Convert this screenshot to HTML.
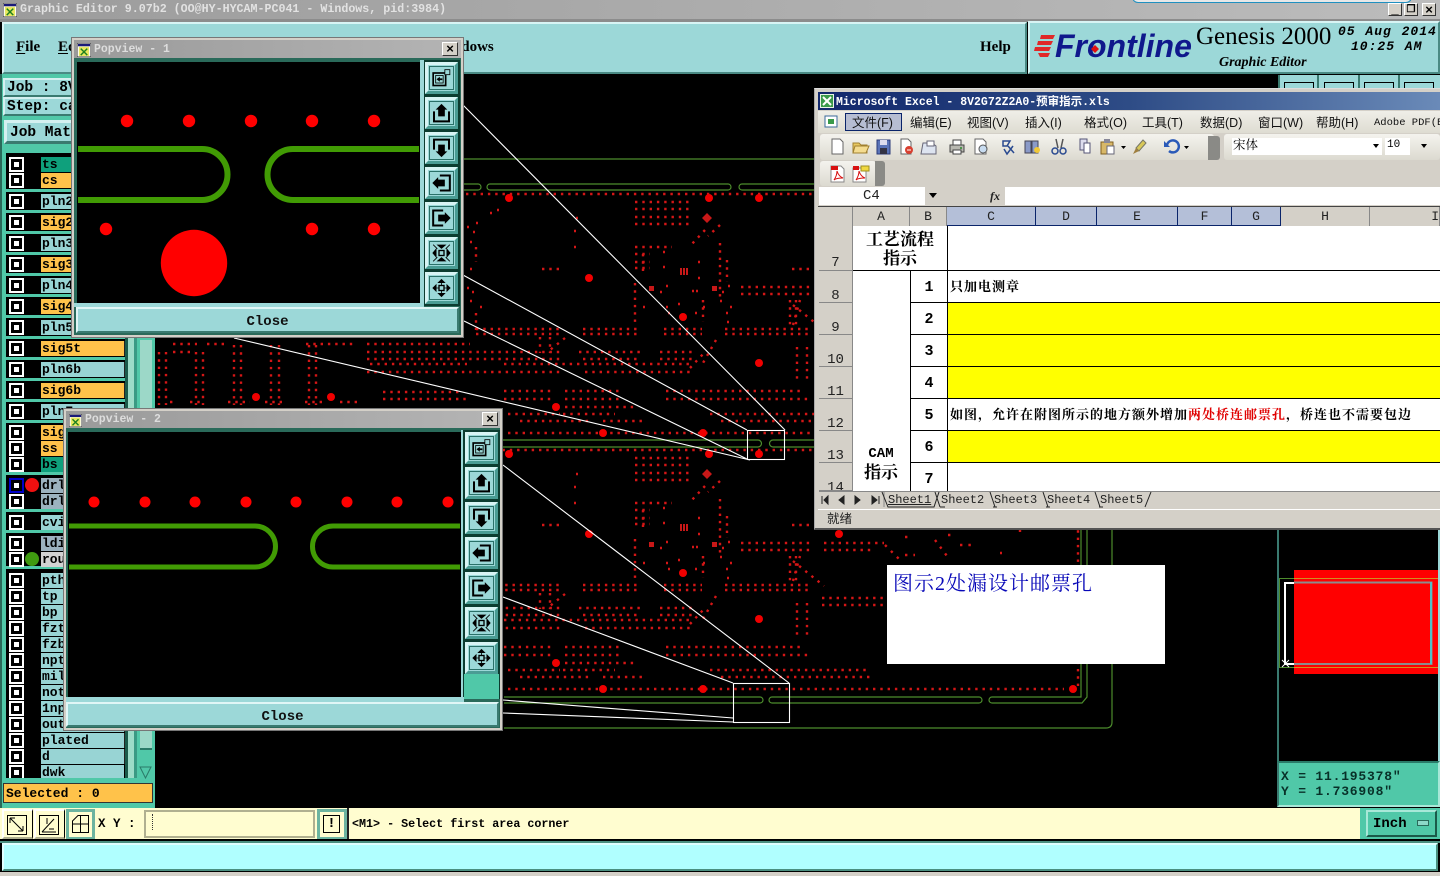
<!DOCTYPE html>
<html lang="zh"><head><meta charset="utf-8"><title>Graphic Editor</title>
<style>
html,body{margin:0;padding:0;background:#000;width:1440px;height:876px;overflow:hidden}
div,svg{position:absolute}
div{white-space:nowrap;box-sizing:border-box}
body{font-family:"Liberation Mono","Noto Sans CJK SC",monospace;font-weight:bold;color:#000}
.tl{background:#9cd8d8;border:2px solid;border-color:#d4f0f0 #3a7a70 #3a7a70 #d4f0f0}
.r{left:8px;width:116px;height:15px}
.r i{position:absolute;left:1px;top:0;width:15px;height:15px;box-sizing:border-box;background:#000;border:2px solid #fff}
.r i:after{content:"";position:absolute;left:3px;top:3px;width:5px;height:5px;background:#fff}
.r b{position:absolute;left:33px;top:0;width:82px;height:15px;background:#98d4d4;font:bold 13px/16px "Liberation Mono",monospace;padding-left:1px;border-right:1px solid #222}
.r b.o{background:#ffc24a}.r b.g{background:#0fa07c}.r b.s{background:#9cb2bf}.r b.w{background:#d2d2d2}
.bar{left:6px;width:119px;height:3px;background:#50c8a8}
.pw{background:#d4d0c8;border:1px solid #777}
.pt{background:linear-gradient(90deg,#9a9a9a,#b4b4b4);color:#ddd;font:bold 11.5px/18px "Liberation Mono",monospace;letter-spacing:0}
.px{background:#d4d0c8;border:1px solid;border-color:#fff #333 #333 #fff;font:bold 13px/12px "Liberation Sans",sans-serif;text-align:center}
.pb{width:33px;height:32px;background:#9cd8d8;border:3px solid;border-color:#d8f4f4 #4a9c94 #4a9c94 #d8f4f4}
.pb span{position:absolute;left:1px;top:1px;right:1px;bottom:1px;border:1px solid #2a7068;display:block}
.pb svg{left:3px;top:3px;width:21px;height:20px}
.cl{background:#9cd8d8;border:2px solid;border-color:#e0f6f6 #3a7a70 #3a7a70 #e0f6f6;font:bold 14px/25px "Liberation Mono",monospace;text-align:center;color:#111}
.m{top:115px;font:12.5px/16px "Liberation Sans","Noto Sans CJK SC",sans-serif;font-weight:normal;color:#111}
.h{top:207px;height:19px;background:#d4d0c8;border-right:1px solid #888;font:normal 13px/20px "Liberation Mono",monospace;text-align:center;color:#222}
.h.s{background:#b4bfd8;border-right:1px solid #0a246a;border-bottom:1px solid #0a246a}
.rh{left:819px;width:34px;background:#d4d0c8;border-bottom:1px solid #888;border-right:1px solid #888;font:normal 14px/15px "Liberation Mono",monospace;text-align:center;color:#222;padding-top:18px}
.y{left:948px;width:492px;background:#ff0;height:31px}
.bl{left:947px;width:493px;height:1px;background:#000}
.n{left:911px;width:36px;text-align:center;font:bold 15px/18px "Liberation Mono",monospace}
.cj{font:bold 13px/16px "Liberation Serif","Noto Serif CJK SC",serif;letter-spacing:1px}
.st{top:493px;font:normal 12px/14px "Liberation Mono",monospace;color:#222}
.tb{top:134px;height:26px;background:linear-gradient(#f4f3ee,#dcdad0);border-radius:3px}
.bb{background:#fffdd0;border:2px solid;border-color:#fff #b0b090 #b0b090 #fff}
</style></head><body>
<svg width="0" height="0" style="left:0;top:0">
<defs>
<symbol id="wi" viewBox="0 0 15 15"><rect width="15" height="15" fill="#fff" stroke="#222"/><rect x="1" y="1" width="13" height="2.5" fill="#1a1a7a"/><rect x="2" y="4" width="11" height="10" fill="#e8e860"/><path d="M4 6l7 7M11 6l-7 7" stroke="#208020" stroke-width="1.6"/></symbol>
<symbol id="i1" viewBox="0 0 24 24"><rect x="2" y="6" width="15" height="15" fill="none" stroke="#000" stroke-width="2"/><rect x="5" y="9" width="9" height="9" fill="none" stroke="#000"/><rect x="16" y="2" width="6" height="6" fill="#9cd8d8" stroke="#000"/><path d="M6 13.5l4-3v2h3v2h-3v2z"/></symbol>
<symbol id="i2" viewBox="0 0 24 24"><path d="M3 10v12h18V10" fill="none" stroke="#000" stroke-width="2.4"/><path d="M12 1l7 7h-3v8H8V8H5z"/></symbol>
<symbol id="i3" viewBox="0 0 24 24"><path d="M3 14V2h18v12" fill="none" stroke="#000" stroke-width="2.4"/><path d="M12 23l7-7h-3V8H8v8H5z"/></symbol>
<symbol id="i4" viewBox="0 0 24 24"><path d="M10 3h12v18H10" fill="none" stroke="#000" stroke-width="2.4"/><path d="M1 12l7-7v3h8v8H8v3z"/></symbol>
<symbol id="i5" viewBox="0 0 24 24"><path d="M14 3H2v18h12" fill="none" stroke="#000" stroke-width="2.4"/><path d="M23 12l-7-7v3H8v8h8v3z"/></symbol>
<symbol id="i6" viewBox="0 0 24 24"><rect x="9" y="9" width="6" height="6" fill="none" stroke="#000" stroke-width="1.6"/><path d="M1 12l5-6v12zM23 12l-5-6v12zM12 7L6 2h12zM12 17l-6 5h12z"/><path d="M2 2l5 5M22 2l-5 5M2 22l5-5M22 22l-5-5" stroke="#000"/></symbol>
<symbol id="i7" viewBox="0 0 24 24"><rect x="9" y="9" width="6" height="6" fill="none" stroke="#000" stroke-width="1.6"/><path d="M1 12l5-5v10zM23 12l-5-5v10zM12 1l5 5H7zM12 23l-5-5h10z"/><path d="M6 12h3M15 12h3M12 6v3M12 15v3" stroke="#000"/></symbol>
</defs></svg>

<!-- title bar -->
<div style="left:0;top:0;width:1440px;height:19px;background:linear-gradient(90deg,#9c9c9c,#bcbcbc)"></div>
<div style="left:0;top:19px;width:1440px;height:3px;background:#8c8c8c"></div>
<svg style="left:3px;top:3px" width="14" height="14"><use href="#wi"/></svg>
<div style="left:20px;top:1px;color:#e2e2e2;font:bold 11.65px/17px 'Liberation Mono',monospace">Graphic Editor 9.07b2 (OO@HY-HYCAM-PC041 - Windows, pid:3984)</div>
<div style="left:1132px;top:-3px;width:280px;height:6px;background:#e8e8e8;border:1px solid #2090c0;border-radius:0 0 6px 6px"></div>
<div class="px" style="left:1388px;top:3px;width:14px;height:13px;line-height:10px">_</div>
<div class="px" style="left:1404px;top:3px;width:14px;height:13px;font-size:10px">❐</div>
<div class="px" style="left:1422px;top:3px;width:14px;height:13px">×</div>

<!-- menu bar -->
<div style="left:2px;top:22px;width:1025px;height:52px;background:#9cd8d8;border:2px solid;border-color:#d8f4f4 #4a8a84 #4a8a84 #d8f4f4"></div>
<div style="left:16px;top:38px;font:bold 15px/18px 'Liberation Serif',serif"><u style="text-underline-offset:2px">F</u>ile</div>
<div style="left:58px;top:38px;font:bold 15px/18px 'Liberation Serif',serif"><u style="text-underline-offset:2px">E</u>dit</div>
<div style="left:434px;top:38px;font:bold 15px/18px 'Liberation Serif',serif">Windows</div>
<div style="left:980px;top:38px;font:bold 15px/18px 'Liberation Serif',serif">Help</div>

<!-- logo panel -->
<div style="left:1028px;top:21px;width:412px;height:53px;background:#9cd8d8;border:2px solid;border-color:#d8f4f4 #4a8a84 #4a8a84 #d8f4f4"></div>
<svg style="left:1033px;top:34px" width="24" height="24"><path d="M8 1h14l-2 4H7zM5 7h15l-2 4H4zM2 13h16l-2 4H1zM5 19h12l-2 4H7z" fill="#e02828"/></svg>
<div style="left:1055px;top:27px;color:#10188c;font:italic bold 32px/38px 'Liberation Sans',sans-serif">Frontline</div>
<svg style="left:1091px;top:45px" width="8" height="8"><path d="M4 0l4 4-4 4-4-4z" fill="#e01010"/></svg>
<div style="left:1196px;top:22px;font:normal 25px/30px 'Liberation Serif',serif">Genesis 2000</div>
<div style="left:1219px;top:54px;font:italic bold 14px/17px 'Liberation Serif',serif">Graphic Editor</div>
<div style="left:1338px;top:24px;font:italic bold 13px/16px 'Liberation Mono',monospace;letter-spacing:1px;word-spacing:1px">05 Aug 2014</div>
<div style="left:1351px;top:39px;font:italic bold 13px/16px 'Liberation Mono',monospace;letter-spacing:1px;word-spacing:1px">10:25 AM</div>

<!-- top right canvas buttons -->
<div style="left:1278px;top:75px;width:162px;height:14px;background:#9cd8d8"></div>
<div style="left:1278px;top:75px;width:2px;height:14px;background:#3a7a70"></div>
<div style="left:1284px;top:82px;width:30px;height:8px;border:1px solid #000"></div>
<div style="left:1324px;top:82px;width:30px;height:8px;border:1px solid #000"></div>
<div style="left:1364px;top:82px;width:30px;height:8px;border:1px solid #000"></div>
<div style="left:1404px;top:82px;width:30px;height:8px;border:1px solid #000"></div>
<div style="left:1317px;top:75px;width:2px;height:14px;background:#3a7a70"></div>
<div style="left:1358px;top:75px;width:2px;height:14px;background:#3a7a70"></div>
<div style="left:1398px;top:75px;width:2px;height:14px;background:#3a7a70"></div>

<!-- PCB canvas -->
<svg style="left:0;top:0" width="1440" height="876">
<defs>
<g id="bd">
<path fill="none" stroke="#d41616" stroke-width="2.4" stroke-dasharray="2.4 4.9" d="M466 194H812M635 202H690M635 209H690M635 217H690M635 224H690M635 247H672M635 254H650M635 262H650M635 268H650M542 269H560M792 269H811M741 287H812M824 287H884M741 294H812M824 294H872M476 329H561M583 329H640M664 329H702M725 329H808M476 334H561M583 334H640M664 334H702M725 334H808M822 342H886M822 349H886M367 352H563M579 352H642M660 352H693M367 359H563M583 359H640M660 359H693M504 364H690M367 372H561M585 372H694M370 364H467M504 391H555M565 391H622M666 391H804M383 392H463M504 399H555M565 399H622M666 399H808M383 399H467M565 407H634M508 414H560M563 414H615M710 414H868M520 421H590M603 421H644M721 421H873M508 433H1064"/>
<path fill="none" stroke="#d41616" stroke-width="2.4" stroke-dasharray="2.4 4.9" d="M476 247V262M476 313V330M635 283V322M720 243V300M727 260V282M790 300V325M796 300V325M797 347V383M807 347V383M540 337V353M550 337V353M643 254V272M703 300V322M1078 194V433"/>
<path fill="none" stroke="#d41616" stroke-width="2.4" stroke-dasharray="2.4 5.5" d="M705 230L690 246M720 225L708 236M716 340L703 363M690 368L705 352M565 338L550 350M793 305L824 330M793 325L800 300"/>
<path fill="none" stroke="#d41616" stroke-width="2.4" d="M497 210h2M490 213h2M476 223h2M467 227h2M473 232h2M470 242h2M470 269h2M467 288h2M472 292h2M470 301h2M480 307h2M576 218h2M574 231h2M574 247h2M663 252h2M663 267h2M698 262h2M698 278h2M666 286h2M660 292h2M692 291h2M696 291h2M722 292h2M728 286h2M720 301h2M730 307h2M726 313h2M727 322h2M643 307h2M666 307h2M678 304h2M695 313h2M703 307h2M668 313h2"/>
<path fill="#c81818" d="M707 213l5 5-5 5-5-5zM680 268h2v7h-2zM683 268h2v7h-2zM686 268h2v7h-2zM649 286h5v5h-5zM712 286h5v5h-5z"/>
<g fill="#f00000"><circle cx="509" cy="198" r="4"/><circle cx="709" cy="198" r="4"/><circle cx="759" cy="198" r="4"/><circle cx="589" cy="278" r="4"/><circle cx="683" cy="317" r="4"/><circle cx="759" cy="363" r="4"/><circle cx="556" cy="407" r="4"/><circle cx="603" cy="433" r="4"/><circle cx="703" cy="433" r="4"/><circle cx="839" cy="278" r="4"/><circle cx="1073" cy="433" r="4"/></g>
</g>
</defs>
<use href="#bd"/>
<use href="#bd" y="256"/>
<path fill="none" stroke="#d41616" stroke-width="2.4" stroke-dasharray="2.4 4.9" d="M159 352V405M166 352V405M196 352V405M203 352V405M234 345V405M241 345V405M271 345V405M279 345V405M309 345V405M316 345V405M173 344H197M207 344H228M173 352H195M306 344H357M367 344H470M170 402H176M190 402H200M228 402H250M265 402H285M305 402H325M340 402H360"/>
<path fill="none" stroke="#d41616" stroke-width="2.4" stroke-dasharray="2.4 6" d="M885 545L900 560M905 555h10M935 540L950 560M960 545H975M905 537h3M948 535h3M1020 530v2M1000 553h2"/>
<g fill="#f00000"><circle cx="256" cy="397" r="4"/><circle cx="331" cy="397" r="4"/></g>
<g fill="none" stroke="#4c8c2c" stroke-width="1.2">
<path d="M463 159H814M463 184H478a3 3 0 0 1 0 6H463M490 184H728a3 3 0 0 1 0 6H490a3 3 0 0 1 0-6M814 184H742a3 3 0 0 0 0 6H814"/>
<path d="M500 440H758a3.500 3.500 0 0 1 0 7H500M814 440H773a3.500 3.500 0 0 0 0 7H814"/>
<path d="M504 697H760a3 3 0 0 1 0 6H504M772 697H979a3 3 0 0 1 0 6H772a3 3 0 0 1 0-6M992 697H1081V530M992 703H1082L1087 697V530a0 0 0 0 1 0 0M992 697a3 3 0 0 0 0 6M504 728H1106q6 0 6-6V530"/>
</g>
<g fill="none" stroke="#fff" stroke-width="1.100">
<rect x="747.500" y="430.500" width="37" height="29"/>
<path d="M463 105L785 430M463 275L747 430M464 321L747 459M234 338L750 460"/>
<rect x="733.500" y="683.500" width="56" height="39"/>
<path d="M503 465L789 683M503 597L733 683M503 700L733 718M503 713L733 722"/>
</g>
</svg>

<!-- left panel -->
<div style="left:0;top:74px;width:155px;height:734px;background:#50c8a8;border-left:2px solid #2a6a5a"></div>
<div class="tl" style="left:3px;top:78px;width:80px;height:19px;font:bold 14.5px/17px 'Liberation Mono',monospace;padding-left:2px">Job : 8V2G72</div>
<div class="tl" style="left:3px;top:97px;width:80px;height:19px;font:bold 14.5px/17px 'Liberation Mono',monospace;padding-left:2px">Step: cam</div>
<div class="tl" style="left:4px;top:120px;width:80px;height:24px;border-width:3px;font:bold 14.5px/20px 'Liberation Mono',monospace;padding-left:3px">Job Matrix</div>
<div style="left:6px;top:153px;width:119px;height:625px;background:#000"></div>
<div class="bar" style="top:189px"></div><div class="bar" style="top:210px"></div><div class="bar" style="top:231px"></div><div class="bar" style="top:252px"></div><div class="bar" style="top:273px"></div><div class="bar" style="top:294px"></div><div class="bar" style="top:315px"></div><div class="bar" style="top:336px"></div><div class="bar" style="top:357px"></div><div class="bar" style="top:378px"></div><div class="bar" style="top:399px"></div><div class="bar" style="top:420px"></div><div class="bar" style="top:472px"></div><div class="bar" style="top:509px"></div><div class="bar" style="top:530px"></div><div class="bar" style="top:566px"></div>
<div class="r" style="top:157px"><i></i><b class="g">ts</b></div>
<div class="r" style="top:173px"><i></i><b class="o">cs</b></div>
<div class="r" style="top:194px"><i></i><b>pln2</b></div>
<div class="r" style="top:215px"><i></i><b class="o">sig2</b></div>
<div class="r" style="top:236px"><i></i><b>pln3</b></div>
<div class="r" style="top:257px"><i></i><b class="o">sig3</b></div>
<div class="r" style="top:278px"><i></i><b>pln4</b></div>
<div class="r" style="top:299px"><i></i><b class="o">sig4</b></div>
<div class="r" style="top:320px"><i></i><b>pln5</b></div>
<div class="r" style="top:341px"><i></i><b class="o">sig5t</b></div>
<div class="r" style="top:362px"><i></i><b>pln6b</b></div>
<div class="r" style="top:383px"><i></i><b class="o">sig6b</b></div>
<div class="r" style="top:404px"><i></i><b>pln7</b></div>
<div class="r" style="top:425px"><i></i><b class="o">sig7</b></div>
<div class="r" style="top:441px"><i></i><b class="o">ss</b></div>
<div class="r" style="top:457px"><i></i><b class="g">bs</b></div>
<div class="r" style="top:478px"><i style="border-color:#0000c8"></i><b class="s">drl</b></div>
<div class="r" style="top:494px"><i></i><b class="s">drl2</b></div>
<div class="r" style="top:515px"><i></i><b>cvi</b></div>
<div class="r" style="top:536px"><i></i><b class="s">ldi</b></div>
<div class="r" style="top:552px"><i></i><b class="w">rou</b></div>
<div class="r" style="top:573px"><i></i><b>pth</b></div>
<div class="r" style="top:589px"><i></i><b>tp</b></div>
<div class="r" style="top:605px"><i></i><b>bp</b></div>
<div class="r" style="top:621px"><i></i><b>fzt</b></div>
<div class="r" style="top:637px"><i></i><b>fzb</b></div>
<div class="r" style="top:653px"><i></i><b>npt</b></div>
<div class="r" style="top:669px"><i></i><b>mil</b></div>
<div class="r" style="top:685px"><i></i><b>not</b></div>
<div class="r" style="top:701px"><i></i><b>1np</b></div>
<div class="r" style="top:717px"><i></i><b>out</b></div>
<div class="r" style="top:733px"><i></i><b>plated</b></div>
<div class="r" style="top:749px"><i></i><b>d</b></div>
<div class="r" style="top:765px;height:13px;overflow:hidden"><i></i><b>dwk</b></div>
<div style="left:25px;top:478px;width:14px;height:14px;border-radius:50%;background:#f01010"></div>
<div style="left:25px;top:552px;width:14px;height:14px;border-radius:50%;background:#3f9a10"></div>
<!-- scrollbar -->
<div style="left:125px;top:153px;width:3px;height:625px;background:#1a5a4a"></div>
<div style="left:128px;top:153px;width:6px;height:625px;background:#9cdcc8"></div>
<div style="left:134px;top:153px;width:3px;height:625px;background:#3a9a84"></div>
<div style="left:139px;top:153px;width:13px;height:612px;background:#50c8a8"></div>
<div style="left:140px;top:340px;width:12px;height:410px;background:#9cd8c8;border-bottom:2px solid #2a7a68"></div>
<svg style="left:139px;top:766px" width="13" height="13"><path d="M1 1h11L6.500 12z" fill="#50c8a8" stroke="#2a7a68"/></svg>
<div style="left:3px;top:783px;width:150px;height:20px;background:#ffc24a;border:1px solid #333;font:bold 13px/20px 'Liberation Mono',monospace;padding-left:2px">Selected : 0</div>

<!-- bottom bar -->
<div style="left:0;top:808px;width:1440px;height:32px;background:#fffdd0"></div>
<div class="bb" style="left:2px;top:809px;width:31px;height:30px;border-right:1px solid #000;background:#fffdd0"></div>
<svg style="left:7px;top:815px" width="20" height="20"><rect x=".5" y=".5" width="19" height="19" fill="none" stroke="#000"/><path d="M3 3l13 13M3 3v5M3 3h5M16 16v-5M16 16h-5" stroke="#000" fill="none"/></svg>
<div class="bb" style="left:34px;top:809px;width:31px;height:30px;border-right:1px solid #000"></div>
<svg style="left:39px;top:815px" width="20" height="20"><rect x=".5" y=".5" width="19" height="19" fill="none" stroke="#000"/><path d="M3 17L15 4M3 17h14M8 3v6M10 14h5" stroke="#000" fill="none"/></svg>
<div style="left:66px;top:809px;width:29px;height:31px;background:#fffdd0;border:3px solid #6cb4a0"></div>
<svg style="left:72px;top:815px" width="17" height="18"><path d="M.5 17.500V6L6 .5h10.500v17zM8.500 .5v17M.5 9h16" fill="none" stroke="#000"/></svg>
<div style="left:98px;top:817px;font:bold 12.5px/15px 'Liberation Mono',monospace;letter-spacing:0">X Y :</div>
<div style="left:144px;top:810px;width:171px;height:28px;background:#fffdd0;border:2px solid #b0b090"></div>
<div style="left:152px;top:814px;width:1px;height:16px;border-left:1px dotted #333"></div>
<div style="left:317px;top:809px;width:30px;height:31px;background:#fffdd0;border:3px solid #6cb4a0"></div>
<div style="left:323px;top:815px;width:17px;height:18px;border:1px solid #000;font:bold 14px/16px 'Liberation Mono',monospace;text-align:center;background:#fffdd0">!</div>
<div style="left:347px;top:808px;width:2px;height:32px;background:#222"></div>
<div style="left:352px;top:817px;font:bold 11.7px/15px 'Liberation Mono',monospace">&lt;M1&gt; - Select first area corner</div>
<div style="left:1360px;top:808px;width:80px;height:31px;background:#50c8a8"></div>
<div style="left:1366px;top:810px;width:71px;height:27px;background:#50c8a8;border:2px solid;border-color:#a8e8d8 #1a5a4a #1a5a4a #a8e8d8;font:bold 14px/25px 'Liberation Mono',monospace;padding-left:5px">Inch</div>
<div style="left:1417px;top:820px;width:12px;height:6px;background:#8cd8c8;border:1px solid #2a6a5a"></div>
<div style="left:0;top:839px;width:1440px;height:2px;background:#000"></div>
<div style="left:0;top:841px;width:1440px;height:2px;background:#4a8f80"></div>
<div style="left:2px;top:843px;width:1436px;height:28px;background:#b0ffff;border:2px solid;border-color:#e0ffff #4a8f80 #4a8f80 #e0ffff;box-shadow:0 1px 0 #000"></div>
<div style="left:0;top:872px;width:1440px;height:4px;background:#d4d0c8"></div>

<!-- minimap -->
<div style="left:1277px;top:530px;width:163px;height:232px;background:#000;border-left:2px solid #3a7a70;border-right:2px solid #9cd8d8"></div>
<div style="left:1294px;top:570px;width:144px;height:104px;background:#f00"></div>
<svg style="left:1279px;top:570px" width="160" height="104"><path d="M0 8.500H159M0 97.500H159" stroke="#d09020" fill="none"/><path d="M.5 8v90M0 8.500H15M0 97.500H15" stroke="#4c8c2c" fill="none"/><path d="M15 12.500H152.500V94H15" fill="none" stroke="#8c8c8c" stroke-width="2"/><path d="M152 12v82" stroke="#50c0c8" stroke-width="2"/><path d="M15 13H6V94H15" fill="none" stroke="#fff" stroke-width="2"/><path d="M3 90l7 7M10 90l-7 7" stroke="#fff"/></svg>
<div style="left:1277px;top:761px;width:163px;height:46px;background:#50c8a8;border:2px solid;border-color:#2a7a68 #a8e8d8 #a8e8d8 #3a7a70;font:bold 13px/15px 'Liberation Mono',monospace;letter-spacing:.8px;padding:6px 0 0 2px;color:#083028">X = 11.195378"<br>Y = 1.736908"</div>

<!-- note -->
<div style="left:887px;top:565px;width:278px;height:99px;background:#fff;color:#0808b8;font:normal 20px/24px 'Liberation Serif','Noto Serif CJK SC',serif;letter-spacing:1px;padding:7px 0 0 6px">图示2处漏设计邮票孔</div>

<!-- Excel -->
<div style="left:814px;top:88px;width:626px;height:442px;background:#d4d0c8;border-left:1px solid #aaa;border-bottom:2px solid #555;border-top:1px solid #ddd"></div>
<div style="left:818px;top:92px;width:622px;height:18px;background:linear-gradient(90deg,#12286c,#2e4c86 50%,#6a8ab8)"></div>
<svg style="left:820px;top:94px" width="14" height="14"><rect width="14" height="14" fill="#e8f4e8"/><path d="M1 1h12v12H1z" fill="#3a9a4a"/><path d="M3 3l8 8M11 3l-8 8" stroke="#fff" stroke-width="2"/></svg>
<div style="left:836px;top:94px;color:#fff;font:bold 11.5px/18px 'Liberation Mono','Noto Sans CJK SC',monospace">Microsoft Excel - 8V2G72Z2A0-预审指示.xls</div>
<div style="left:818px;top:111px;width:622px;height:22px;background:linear-gradient(#efeee8,#dedcd2)"></div>
<svg style="left:823px;top:113px" width="18" height="18"><path d="M2 3h12v11H2z" fill="#fff" stroke="#3a6a9a"/><path d="M5 6h6v5H5z" fill="#3a9a4a"/></svg>
<div style="left:845px;top:113px;width:57px;height:18px;background:#b6bdd2;border:1px solid #0a246a"></div>
<div class="m" style="left:852px">文件(F)</div><div class="m" style="left:910px">编辑(E)</div><div class="m" style="left:967px">视图(V)</div><div class="m" style="left:1025px">插入(I)</div><div class="m" style="left:1084px">格式(O)</div><div class="m" style="left:1142px">工具(T)</div><div class="m" style="left:1200px">数据(D)</div><div class="m" style="left:1258px">窗口(W)</div><div class="m" style="left:1316px">帮助(H)</div>
<div class="m" style="left:1374px;font:10.500px/16px 'Liberation Mono',monospace">Adobe PDF(B)</div>

<div class="tb" style="left:820px;width:394px"></div>
<div style="left:1208px;top:136px;width:12px;height:24px;background:#8a8a86;border-radius:0 3px 3px 0"></div>
<div class="tb" style="left:1224px;width:216px"></div>
<div style="left:1232px;top:138px;width:150px;height:17px;background:#fff;font:normal 12.5px/15px 'Liberation Serif','Noto Serif CJK SC',serif;padding-left:1px">宋体</div>
<div style="left:1385px;top:138px;width:25px;height:17px;background:#fff;font:normal 11px/15px 'Liberation Mono',monospace;padding-left:2px">10</div>
<svg style="left:825px;top:137px" width="370" height="20">
<path d="M7 2h8l3 3v12H7z" fill="#fff" stroke="#666"/>
<path d="M28 6h6l2 2h6v8H28z" fill="#e8c860" stroke="#a08030"/><path d="M30 9h14l-3 7H28z" fill="#f4dc90" stroke="#a08030"/>
<path d="M52 3h13v14H52z" fill="#5a74b8" stroke="#2a3a78"/><path d="M55 3h7v5h-7z" fill="#dde"/><path d="M55 11h7v6h-7z" fill="#334"/>
<path d="M76 2h7l3 3v12H76z" fill="#fff" stroke="#666"/><circle cx="84" cy="13" r="4" fill="#d84030"/><path d="M82 13h4" stroke="#fff"/>
<path d="M98 6h9l4 3v8H96z" fill="#dde4f0" stroke="#667"/><path d="M102 4h7v5h-7z" fill="#fff" stroke="#667"/>
<path d="M125 8h14v7h-14z" fill="#b8b8b0" stroke="#444"/><path d="M128 3h8v5h-8zM128 13h8v4h-8z" fill="#fff" stroke="#444"/><circle cx="136" cy="11" r="1" fill="#2a8a2a"/>
<path d="M150 2h8l3 3v12H150z" fill="#fff" stroke="#666"/><circle cx="158" cy="12" r="4" fill="#c8dcf0" stroke="#555"/>
<path d="M178 4h7l-3 5h-4zM183 9l6 7M179 12l3 5 6-8" fill="none" stroke="#2a4a90" stroke-width="1.500"/>
<path d="M200 4h6v12h-6zM207 4h6v12h-6z" fill="#8a9ac8" stroke="#445"/><circle cx="212" cy="13" r="3" fill="#f0c838"/>
<path d="M231 2l2 9M238 2l-2 9" stroke="#555" stroke-width="1.500"/><circle cx="230" cy="14" r="3" fill="none" stroke="#2a4a90" stroke-width="1.500"/><circle cx="238" cy="14" r="3" fill="none" stroke="#2a4a90" stroke-width="1.500"/>
<path d="M255 2h7v11h-7z" fill="#dde" stroke="#557"/><path d="M259 6h6v10h-6z" fill="#fff" stroke="#557"/>
<path d="M276 5h12v12h-12z" fill="#d8b868" stroke="#806020"/><path d="M279 2h6v4h-6z" fill="#889"/><path d="M282 9h7v8h-7z" fill="#fff" stroke="#667"/><path d="M296 9h5l-2.500 3z" fill="#000"/>
<path d="M318 3l-7 8 3 3 7-8z" fill="#d8c858" stroke="#776"/><path d="M311 11l-3 6 6-3z" fill="#a08040"/>
<path d="M342 8a6 6 0 1 1 2 6" fill="none" stroke="#2a5ab8" stroke-width="2.500"/><path d="M339 4v6h6z" fill="#2a5ab8"/><path d="M359 9h5l-2.500 3z" fill="#000"/>
</svg>
<svg style="left:1372px;top:143px" width="60" height="6"><path d="M1 1h6L4 5zM49 1h6l-3 4z"/></svg>

<div class="tb" style="left:820px;top:161px;width:56px;height:25px"></div>
<div style="left:875px;top:161px;width:10px;height:25px;background:#8a8a86;border-radius:0 3px 3px 0"></div>
<svg style="left:828px;top:164px" width="46" height="19"><path d="M3 2h10l3 3v13H3z" fill="#fff" stroke="#888"/><path d="M3 2h7v4H3z" fill="#d81010"/><path d="M6 16c2-3 3-7 3-9 1 3 3 6 6 7-3 0-7 0-9 2z" fill="none" stroke="#d81010"/><path d="M25 4h10l3 3v11H25z" fill="#fff" stroke="#888"/><path d="M25 2h6v4h-6z" fill="#d81010"/><path d="M33 2h8v5h-8z" fill="#f0d840" stroke="#a09020"/><path d="M28 16c2-3 3-7 3-9 1 3 3 6 6 7-3 0-7 0-9 2z" fill="none" stroke="#d81010"/></svg>

<div style="left:819px;top:187px;width:106px;height:18px;background:#fff;font:normal 14px/19px 'Liberation Mono',monospace;color:#222;padding-left:44px">C4</div>
<svg style="left:929px;top:193px" width="10" height="6"><path d="M0 0h8L4 5z"/></svg>
<div style="left:990px;top:187px;font:italic bold 12px/18px 'Liberation Serif',serif;color:#222">fx</div>
<div style="left:1005px;top:187px;width:435px;height:18px;background:#fff"></div>
<div style="left:818px;top:206px;width:622px;height:1px;background:#444"></div>

<div class="h" style="left:819px;width:34px"></div>
<div class="h" style="left:853px;width:57px">A</div><div class="h" style="left:910px;width:37px">B</div>
<div class="h s" style="left:947px;width:89px">C</div><div class="h s" style="left:1036px;width:61px">D</div><div class="h s" style="left:1097px;width:81px">E</div><div class="h s" style="left:1178px;width:54px">F</div><div class="h s" style="left:1232px;width:49px">G</div>
<div class="h" style="left:1281px;width:89px">H</div><div class="h" style="left:1370px;width:70px;text-align:right">I</div>
<div style="left:853px;top:226px;width:587px;height:265px;background:#fff"></div>
<div class="rh" style="top:226px;height:45px;padding-top:30px">7</div>
<div class="rh" style="top:271px;height:32px">8</div><div class="rh" style="top:303px;height:32px">9</div><div class="rh" style="top:335px;height:32px">10</div><div class="rh" style="top:367px;height:32px">11</div><div class="rh" style="top:399px;height:32px">12</div><div class="rh" style="top:431px;height:32px">13</div><div class="rh" style="top:463px;height:28px;overflow:hidden">14</div>
<div class="y" style="top:303px"></div><div class="y" style="top:335px"></div><div class="y" style="top:367px"></div><div class="y" style="top:431px"></div>
<div class="bl" style="top:270px;left:853px;width:587px"></div>
<div class="bl" style="top:302px;left:910px;width:530px"></div><div class="bl" style="top:334px;left:910px;width:530px"></div><div class="bl" style="top:366px;left:910px;width:530px"></div><div class="bl" style="top:398px;left:910px;width:530px"></div><div class="bl" style="top:430px;left:910px;width:530px"></div><div class="bl" style="top:462px;left:910px;width:530px"></div>
<div style="left:910px;top:270px;width:1px;height:221px;background:#000"></div>
<div style="left:947px;top:226px;width:1px;height:265px;background:#000"></div>
<div style="left:853px;top:230px;width:94px;text-align:center;font:bold 17px/19px 'Liberation Serif','Noto Serif CJK SC',serif">工艺流程<br>指示</div>
<div style="left:853px;top:446px;width:56px;text-align:center;font:bold 14px/16px 'Liberation Mono',monospace">CAM</div>
<div style="left:853px;top:463px;width:56px;text-align:center;font:bold 17px/20px 'Liberation Serif','Noto Serif CJK SC',serif">指示</div>
<div class="n" style="top:279px">1</div><div class="n" style="top:311px">2</div><div class="n" style="top:343px">3</div><div class="n" style="top:375px">4</div><div class="n" style="top:407px">5</div><div class="n" style="top:439px">6</div><div class="n" style="top:471px">7</div>
<div class="cj" style="left:950px;top:279px">只加电测章</div>
<div class="cj" style="left:950px;top:407px">如图，允许在附图所示的地方额外增加<span style="color:#e00000">两处桥连邮票孔</span>，桥连也不需要包边</div>

<div style="left:819px;top:491px;width:621px;height:18px;background:#d4d0c8;border-top:1px solid #888"></div>
<svg style="left:819px;top:492px" width="68" height="16"><path d="M3 4v8M9 4L5 8l4 4zM25 4l-5 4 5 4zM36 4l5 4-5 4zM53 4l5 4-5 4zM60 4v8" fill="#222" stroke="#222"/><path d="M65 0v15" stroke="#888"/></svg>
<svg style="left:880px;top:492px" width="280" height="17"><path d="M2 0l6 15h46l5-15M60 15l-5-15M115 15l-5-15M168 15l-5-15M220 15l-5-15M271 0l-6 15M60 15h5M113 15h4M166 15h4M219 15h4" fill="none" stroke="#222"/></svg>
<div class="st" style="left:888px;text-decoration:underline">Sheet1</div><div class="st" style="left:941px">Sheet2</div><div class="st" style="left:994px">Sheet3</div><div class="st" style="left:1047px">Sheet4</div><div class="st" style="left:1100px">Sheet5</div>
<div style="left:818px;top:509px;width:622px;height:1px;background:#fff"></div>
<div style="left:827px;top:511px;font:normal 12.500px/16px 'Liberation Sans','Noto Sans CJK SC',sans-serif;color:#222">就绪</div>

<!-- Popview 1 -->
<div class="pw" style="left:71px;top:37px;width:393px;height:301px;background:#d4d0c8"></div>
<div class="pt" style="left:74px;top:40px;width:387px;height:18px;padding-left:20px;line-height:20px">Popview - 1</div>
<svg style="left:77px;top:43px" width="14" height="14"><use href="#wi"/></svg>
<div class="px" style="left:442px;top:42px;width:16px;height:14px">×</div>
<div style="left:74px;top:58px;width:387px;height:277px;background:#2a6a5a"></div>
<div style="left:77px;top:62px;width:343px;height:241px;background:#000"></div>
<svg style="left:77px;top:62px" width="343" height="241">
<g fill="none" stroke="#419b04" stroke-width="6"><path d="M1 87H125a25.500 25.500 0 0 1 0 51H1"/><path d="M342 87H216a25.500 25.500 0 0 0 0 51H342"/></g>
<g fill="#f00"><circle cx="50" cy="59" r="6.200"/><circle cx="112" cy="59" r="6.200"/><circle cx="174" cy="59" r="6.200"/><circle cx="235" cy="59" r="6.200"/><circle cx="297" cy="59" r="6.200"/><circle cx="29" cy="167" r="6.200"/><circle cx="235" cy="167" r="6.200"/><circle cx="297" cy="167" r="6.200"/><circle cx="117" cy="201" r="33.200"/></g>
</svg>
<div style="left:420px;top:60px;width:4px;height:245px;background:#9cd8d8"></div>
<div style="left:424px;top:60px;width:36px;height:246px;background:#0c3c30"></div>
<div class="pb" style="left:425px;top:62px"><span></span><svg><use href="#i1"/></svg></div>
<div class="pb" style="left:425px;top:97px"><span></span><svg><use href="#i2"/></svg></div>
<div class="pb" style="left:425px;top:132px"><span></span><svg><use href="#i3"/></svg></div>
<div class="pb" style="left:425px;top:167px"><span></span><svg><use href="#i4"/></svg></div>
<div class="pb" style="left:425px;top:202px"><span></span><svg><use href="#i5"/></svg></div>
<div class="pb" style="left:425px;top:237px"><span></span><svg><use href="#i6"/></svg></div>
<div class="pb" style="left:425px;top:272px"><span></span><svg><use href="#i7"/></svg></div>
<div style="left:74px;top:303px;width:350px;height:4px;background:#9cd8d8"></div>
<div class="cl" style="left:76px;top:307px;width:383px;height:26px;line-height:26px">Close</div>

<!-- Popview 2 -->
<div class="pw" style="left:63px;top:408px;width:440px;height:323px"></div>
<div class="pt" style="left:66px;top:411px;width:434px;height:17px;padding-left:19px;line-height:18px">Popview - 2</div>
<svg style="left:69px;top:414px" width="13" height="13"><use href="#wi"/></svg>
<div class="px" style="left:482px;top:412px;width:16px;height:14px">×</div>
<div style="left:66px;top:428px;width:434px;height:300px;background:#2a6a5a"></div>
<div style="left:68px;top:432px;width:393px;height:265px;background:#000"></div>
<svg style="left:68px;top:432px" width="393" height="265">
<g fill="none" stroke="#419b04" stroke-width="5"><path d="M1 94H187a20.500 20.500 0 0 1 0 41H1"/><path d="M392 94H265a20.500 20.500 0 0 0 0 41H392"/></g>
<g fill="#f00"><circle cx="26" cy="70" r="5.500"/><circle cx="77" cy="70" r="5.500"/><circle cx="127" cy="70" r="5.500"/><circle cx="178" cy="70" r="5.500"/><circle cx="228" cy="70" r="5.500"/><circle cx="279" cy="70" r="5.500"/><circle cx="329" cy="70" r="5.500"/><circle cx="380" cy="70" r="5.500"/></g>
</svg>
<div style="left:461px;top:430px;width:3px;height:269px;background:#9cd8d8"></div>
<div style="left:463px;top:430px;width:37px;height:269px;background:#0c3c30"></div>
<div style="left:464px;top:674px;width:35px;height:25px;background:#50c8a8"></div>
<div class="pb" style="left:465px;top:432px"><span></span><svg><use href="#i1"/></svg></div>
<div class="pb" style="left:465px;top:467px"><span></span><svg><use href="#i2"/></svg></div>
<div class="pb" style="left:465px;top:502px"><span></span><svg><use href="#i3"/></svg></div>
<div class="pb" style="left:465px;top:537px"><span></span><svg><use href="#i4"/></svg></div>
<div class="pb" style="left:465px;top:572px"><span></span><svg><use href="#i5"/></svg></div>
<div class="pb" style="left:465px;top:607px"><span></span><svg><use href="#i6"/></svg></div>
<div class="pb" style="left:465px;top:642px"><span></span><svg><use href="#i7"/></svg></div>
<div style="left:66px;top:697px;width:398px;height:5px;background:#9cd8d8"></div>
<div class="cl" style="left:66px;top:702px;width:433px;height:25px;line-height:26px">Close</div>
</body></html>
